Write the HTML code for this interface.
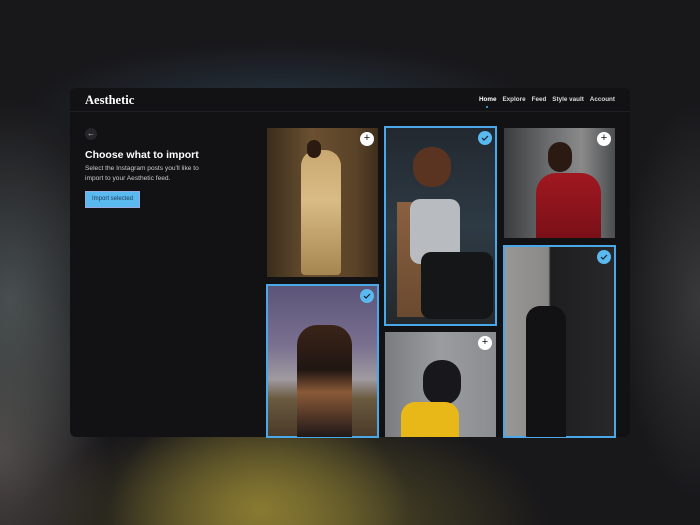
<!DOCTYPE html>
<html><head><meta charset="utf-8"><style>
*{margin:0;padding:0;box-sizing:border-box}
html,body{width:700px;height:525px;overflow:hidden}
body{position:relative;font-family:"Liberation Sans",sans-serif;
background:
radial-gradient(ellipse 150px 110px at 260px 510px,rgba(140,125,50,.95),rgba(140,125,50,0) 100%),
radial-gradient(ellipse 260px 120px at 290px 525px,rgba(110,100,45,.8),rgba(110,100,45,0) 100%),
radial-gradient(ellipse 120px 200px at 10px 300px,rgba(80,88,88,.85),rgba(80,88,88,0)),
radial-gradient(ellipse 110px 180px at 0px 450px,rgba(85,78,75,.9),rgba(85,78,75,0)),
radial-gradient(ellipse 260px 70px at 280px 110px,rgba(40,55,68,.9),rgba(40,55,68,0)),
radial-gradient(ellipse 80px 200px at 700px 300px,rgba(70,70,72,.7),rgba(70,70,72,0)),
#18171a;}
.win{position:absolute;left:70px;top:88px;width:560px;height:349px;background:#121114;border-radius:6px;overflow:hidden}
.hdr{position:absolute;left:0;top:0;width:560px;height:24px;border-bottom:1px solid #1f1e22}
.logo{position:absolute;left:15px;top:5px;font-family:"Liberation Serif",serif;font-weight:bold;color:#fff;font-size:12.5px}
.nav{position:absolute;right:15px;top:8px;font-size:6.3px;color:#ddd;font-weight:bold}
.nav span{margin-left:6px}
.dot{position:absolute;left:416px;top:18px;width:2px;height:2px;background:#4ab4f0;border-radius:1px}
.back{position:absolute;left:15px;top:40px;width:12px;height:12px;border-radius:6px;background:#26252a;color:#ccc;font-size:8px;line-height:12px;text-align:center}
h1{position:absolute;left:15px;top:61px;font-size:10.5px;color:#fff;font-weight:bold;white-space:nowrap}
.p{position:absolute;left:15px;top:76px;font-size:6.6px;color:#ccc;line-height:10px;width:130px}
.btn{position:absolute;left:15px;top:103px;width:55px;height:17px;background:#5ab9ef;border:1px solid #9ad;color:#1d3a55;font-size:6px;line-height:15px;text-align:center}
.ph{position:absolute;overflow:hidden}
.sel{outline:2px solid #4aa8e8;outline-offset:-1px}
.ic{position:absolute;top:4px;right:4px;width:14px;height:14px;border-radius:7px;background:#fff;color:#111;font-size:11px;line-height:13px;text-align:center}
.ck{background:#5ab9ef}
.ck svg{position:absolute;left:3px;top:4px}
</style></head><body>
<div class="win">
<div class="hdr"><div class="logo">Aesthetic</div>
<div class="nav"><span style="color:#fff">Home</span><span>Explore</span><span>Feed</span><span>Style vault</span><span>Account</span></div><div class="dot"></div></div>
<div class="back">←</div>
<h1>Choose what to import</h1>
<div class="p">Select the Instagram posts you'll like to import to your Aesthetic feed.</div>
<div class="btn">Import selected</div>
</div>
<div class="ph" style="left:267px;top:128px;width:111px;height:149px;background:linear-gradient(90deg,#3a2d1c,#6a5030 40%,#5a4228 80%,#3e2e1c)">
<div style="position:absolute;left:34px;top:22px;width:40px;height:125px;background:linear-gradient(#c9a870,#d8bb85 40%,#a68650);border-radius:16px 16px 4px 4px"></div>
<div style="position:absolute;left:40px;top:12px;width:14px;height:18px;background:#2a1a10;border-radius:7px"></div>
<div class="ic">+</div></div>
<div class="ph sel" style="left:267px;top:285px;width:111px;height:152px;background:linear-gradient(#5a5478,#7a7090 40%,#a09aa0 62%,#6a5a40 75%,#4a3a28)">
<div style="position:absolute;left:30px;top:40px;width:55px;height:112px;background:linear-gradient(#3a2418,#201612 40%,#8a5a38 60%,#201818);border-radius:20px 20px 0 0"></div>
<div class="ic ck"><svg width="8" height="6"><path d="M1 3l2 2 4-4" stroke="#123" stroke-width="1.2" fill="none"/></svg></div></div>
<div class="ph sel" style="left:385px;top:127px;width:111px;height:198px;background:linear-gradient(#222830,#2e3a44 50%,#24282c)">
<div style="position:absolute;left:12px;top:75px;width:36px;height:115px;background:linear-gradient(#8a6040,#6a4a30);"></div>
<div style="position:absolute;left:28px;top:20px;width:38px;height:40px;background:#5a3420;border-radius:18px"></div>
<div style="position:absolute;left:25px;top:72px;width:50px;height:65px;background:#b8bcc0;border-radius:10px"></div>
<div style="position:absolute;left:36px;top:125px;width:72px;height:67px;background:#141618;border-radius:10px"></div>
<div class="ic ck"><svg width="8" height="6"><path d="M1 3l2 2 4-4" stroke="#123" stroke-width="1.2" fill="none"/></svg></div></div>
<div class="ph" style="left:385px;top:332px;width:111px;height:105px;background:linear-gradient(90deg,#7a7c80,#9a9ca0 50%,#8a8c90)">
<div style="position:absolute;left:38px;top:28px;width:38px;height:45px;background:#18181c;border-radius:18px"></div>
<div style="position:absolute;left:16px;top:70px;width:58px;height:40px;background:#e8b818;border-radius:14px 14px 0 0"></div>
<div class="ic">+</div></div>
<div class="ph" style="left:504px;top:128px;width:111px;height:110px;background:linear-gradient(90deg,#3a3c3e,#6a6c6e 40%,#8a8a8a 70%,#4a4c4e)">
<div style="position:absolute;left:32px;top:45px;width:65px;height:65px;background:linear-gradient(#a01820,#7a1018);border-radius:20px 20px 0 0"></div>
<div style="position:absolute;left:44px;top:14px;width:24px;height:30px;background:#2a1a12;border-radius:12px"></div>
<div class="ic">+</div></div>
<div class="ph sel" style="left:504px;top:246px;width:111px;height:191px;background:linear-gradient(90deg,#9a9896,#8a8886 40%,#1e1e20 42%,#28282a)">
<div style="position:absolute;left:22px;top:60px;width:40px;height:131px;background:#121214;border-radius:14px 14px 0 0"></div>
<div class="ic ck"><svg width="8" height="6"><path d="M1 3l2 2 4-4" stroke="#123" stroke-width="1.2" fill="none"/></svg></div></div>
</body></html>
